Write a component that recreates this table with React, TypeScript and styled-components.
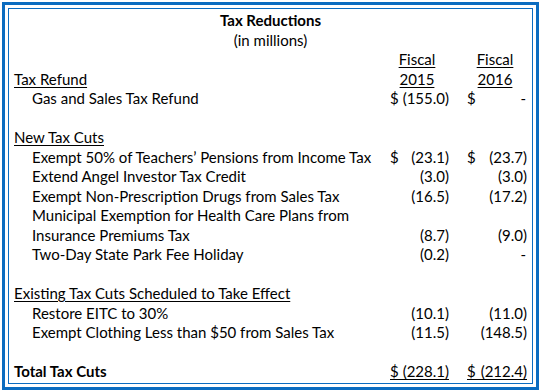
import React from "react";
import styled, { createGlobalStyle } from "styled-components";

const GlobalStyle = createGlobalStyle`
  html, body { margin: 0; padding: 0; background: #ffffff; }
  body {
    font-family: Lato, "Open Sans", "Liberation Sans", sans-serif;
    font-size: 15px;
    color: #000000;
  }
`;

const Frame = styled.div`
  box-sizing: border-box;
  margin: 2px;
  width: 537px;
  height: 388px;
  border: 3px solid #0b6cc0;
  padding: 3px;
`;

const Panel = styled.div`
  box-sizing: border-box;
  height: 376px;
  border: 1px solid #0b6cc0;
  padding-top: 2px;
  display: grid;
  grid-template-columns: 377px 68px 78px;
  grid-auto-rows: 19.5px;
  line-height: 19.5px;
`;

const Title = styled.div<{ $bold?: boolean }>`
  grid-column: 1 / -1;
  text-align: center;
  font-weight: ${(p) => (p.$bold ? 700 : 400)};
`;

const Label = styled.div<{ $indent?: boolean; $underline?: boolean; $bold?: boolean }>`
  grid-column: 1;
  padding-left: ${(p) => (p.$indent ? 23 : 5)}px;
  white-space: nowrap;
  font-weight: ${(p) => (p.$bold ? 700 : 400)};
  text-decoration: ${(p) => (p.$underline ? "underline" : "none")};
  text-underline-offset: 2px;
`;

const Header = styled.div<{ $col: "a" | "b" }>`
  text-align: center;
  padding-right: ${(p) => (p.$col === "a" ? 6 : 0)}px;
  padding-left: ${(p) => (p.$col === "b" ? 4 : 0)}px;
  text-decoration: underline;
  text-underline-offset: 2px;
`;

const Cell = styled.div<{ $col: "a" | "b" }>`
  display: flex;
  align-items: flex-start;
  padding-left: ${(p) => (p.$col === "a" ? 4 : 13)}px;
  padding-right: 5px;
`;

const Amount = styled.div<{ $underline?: boolean }>`
  flex: 1;
  display: flex;
  justify-content: space-between;
  height: 17px;
  border-bottom: ${(p) => (p.$underline ? "1px solid #000" : "none")};
`;

const Dash = styled.span`
  padding-right: 1px;
`;

type Value = { dollar?: boolean; text: string };
type Row = {
  label: string;
  indent?: boolean;
  underline?: boolean;
  bold?: boolean;
  a?: Value;
  b?: Value;
  total?: boolean;
};

const rows: Row[] = [
  { label: "Gas and Sales Tax Refund", indent: true, a: { dollar: true, text: "(155.0)" }, b: { dollar: true, text: "-" } },
  { label: "" },
  { label: "New Tax Cuts", underline: true },
  { label: "Exempt 50% of Teachers\u2019 Pensions from Income Tax", indent: true, a: { dollar: true, text: "(23.1)" }, b: { dollar: true, text: "(23.7)" } },
  { label: "Extend Angel Investor Tax Credit", indent: true, a: { text: "(3.0)" }, b: { text: "(3.0)" } },
  { label: "Exempt Non-Prescription Drugs from Sales Tax", indent: true, a: { text: "(16.5)" }, b: { text: "(17.2)" } },
  { label: "Municipal Exemption for Health Care Plans from", indent: true },
  { label: "Insurance Premiums Tax", indent: true, a: { text: "(8.7)" }, b: { text: "(9.0)" } },
  { label: "Two-Day State Park Fee Holiday", indent: true, a: { text: "(0.2)" }, b: { text: "-" } },
  { label: "" },
  { label: "Existing Tax Cuts Scheduled to Take Effect", underline: true },
  { label: "Restore EITC to 30%", indent: true, a: { text: "(10.1)" }, b: { text: "(11.0)" } },
  { label: "Exempt Clothing Less than $50 from Sales Tax", indent: true, a: { text: "(11.5)" }, b: { text: "(148.5)" } },
  { label: "" },
  { label: "Total Tax Cuts", bold: true, total: true, a: { dollar: true, text: "(228.1)" }, b: { dollar: true, text: "(212.4)" } },
];

function ValueCell({ col, v, underline }: { col: "a" | "b"; v?: Value; underline?: boolean }) {
  if (!v) return <Cell $col={col} />;
  return (
    <Cell $col={col}>
      <Amount $underline={underline}>
        <span>{v.dollar ? "$" : ""}</span>
        {v.text === "-" ? <Dash>-</Dash> : <span>{v.text}</span>}
      </Amount>
    </Cell>
  );
}

export default function App() {
  return (
    <>
      <GlobalStyle />
      <Frame>
        <Panel>
          <Title $bold>Tax Reductions</Title>
          <Title>(in millions)</Title>
          <Label />
          <Header $col="a">Fiscal</Header>
          <Header $col="b">Fiscal</Header>
          <Label $underline>Tax Refund</Label>
          <Header $col="a">2015</Header>
          <Header $col="b">2016</Header>
          {rows.map((r, i) => (
            <React.Fragment key={i}>
              <Label $indent={r.indent} $underline={r.underline} $bold={r.bold}>
                {r.label}
              </Label>
              <ValueCell col="a" v={r.a} underline={r.total} />
              <ValueCell col="b" v={r.b} underline={r.total} />
            </React.Fragment>
          ))}
        </Panel>
      </Frame>
    </>
  );
}
